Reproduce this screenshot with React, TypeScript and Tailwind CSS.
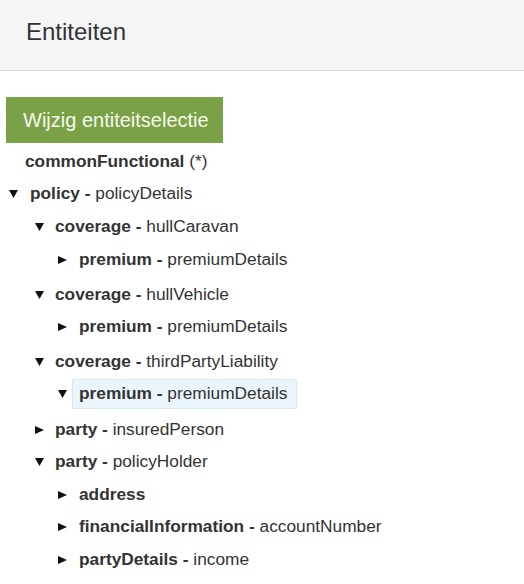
import React from "react";

type Node = {
  name: string;
  desc?: string;
  extra?: string;
  state?: "open" | "closed" | "none";
  selected?: boolean;
};

const Down = () => (
  <svg width="9" height="8" viewBox="0 0 9 8" className="shrink-0">
    <polygon points="0,0 9,0 4.5,8" fill="#111" />
  </svg>
);
const Right = () => (
  <svg width="9" height="8" viewBox="0 0 9 8" className="shrink-0">
    <polygon points="0,0 9,4 0,8" fill="#111" />
  </svg>
);

function Label({ n }: { n: Node }) {
  return (
    <span className="whitespace-nowrap">
      <b className="font-bold text-[#333]">
        {n.name}
        {n.desc ? " -" : ""}
      </b>
      {n.desc && <span className="text-[#333]"> {n.desc}</span>}
      {n.extra && <span className="text-[#333]"> {n.extra}</span>}
    </span>
  );
}

function Row({ n, level, mt }: { n: Node; level: number; mt: string }) {
  const left = [9, 35, 58][level];
  return (
    <div className={`flex h-[32px] items-center ${mt}`} style={{ paddingLeft: left }}>
      {n.state === "open" ? <Down /> : <Right />}
      {n.selected ? (
        <span className="ml-[5px] flex h-[30px] items-center rounded-[2px] border border-[#d6e8f3] bg-[#ebf5fc] pl-[6px] pr-[9px]">
          <Label n={n} />
        </span>
      ) : (
        <span className={level === 1 ? "ml-[11px]" : "ml-[12px]"}>
          <Label n={n} />
        </span>
      )}
    </div>
  );
}

export default function App() {
  return (
    <div
      className="min-h-[584px] w-[524px] bg-white text-[#333]"
      style={{ fontFamily: '"Liberation Sans", Arial, sans-serif' }}
    >
      <div className="flex h-[71px] items-center border-b border-[#dddddd] bg-[#f5f5f5] pl-[26px]">
        <h1 className="-mt-[6px] text-[24px] leading-none text-[#333]">Entiteiten</h1>
      </div>
      <div className="pt-[26px]">
        <button className="ml-[6px] flex h-[46px] w-[217px] items-center bg-[#7aa146] pl-[17px] text-[20px] text-[#f6f9ef]">
          Wijzig entiteitselectie
        </button>
        <div className="text-[17.3px]">
          <div className="mt-[3px] flex h-[32px] items-center pl-[25px]">
            <Label n={{ name: "commonFunctional", extra: "(*)" }} />
          </div>
          <Row n={{ name: "policy", desc: "policyDetails", state: "open" }} level={0} mt="" />
          <Row n={{ name: "coverage", desc: "hullCaravan", state: "open" }} level={1} mt="mt-[1px]" />
          <Row n={{ name: "premium", desc: "premiumDetails", state: "closed" }} level={2} mt="mt-[1px]" />
          <Row n={{ name: "coverage", desc: "hullVehicle", state: "open" }} level={1} mt="mt-[3px]" />
          <Row n={{ name: "premium", desc: "premiumDetails", state: "closed" }} level={2} mt="" />
          <Row n={{ name: "coverage", desc: "thirdPartyLiability", state: "open" }} level={1} mt="mt-[3px]" />
          <Row n={{ name: "premium", desc: "premiumDetails", state: "open", selected: true }} level={2} mt="" />
          <Row n={{ name: "party", desc: "insuredPerson", state: "closed" }} level={1} mt="mt-[4px]" />
          <Row n={{ name: "party", desc: "policyHolder", state: "open" }} level={1} mt="" />
          <Row n={{ name: "address", state: "closed" }} level={2} mt="mt-[1px]" />
          <Row n={{ name: "financialInformation", desc: "accountNumber", state: "closed" }} level={2} mt="" />
          <Row n={{ name: "partyDetails", desc: "income", state: "closed" }} level={2} mt="mt-[1px]" />
        </div>
      </div>
    </div>
  );
}
